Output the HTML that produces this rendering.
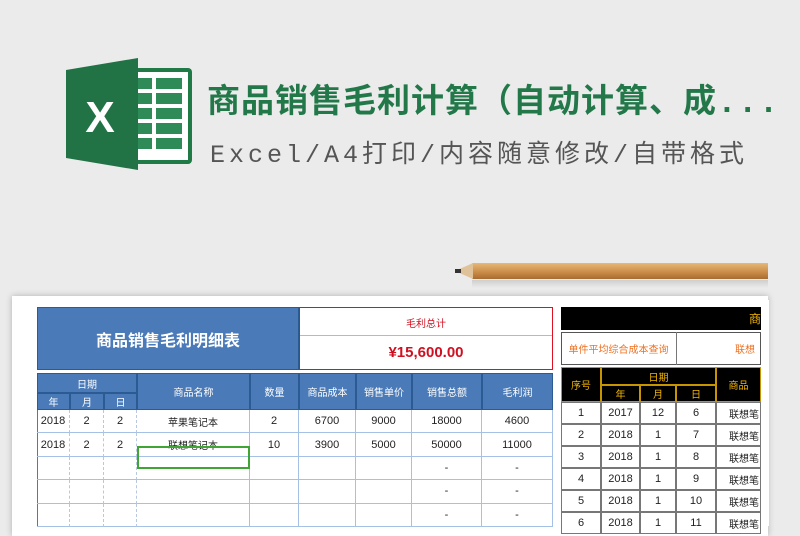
<!DOCTYPE html>
<html><head><meta charset="utf-8"><style>
*{margin:0;padding:0;box-sizing:border-box}
body{width:800px;height:526px;overflow:hidden;background:#ebebeb;position:relative;font-family:"Liberation Sans","Noto Sans CJK SC",sans-serif}
.a{position:absolute}
.t1{left:207px;top:74px;font-size:33px;font-weight:bold;color:#23784a;white-space:nowrap;letter-spacing:1px;font-family:"Liberation Mono","Noto Sans CJK SC",monospace}
.t2{left:210px;top:134px;font-size:25px;color:#555;white-space:nowrap;letter-spacing:4px;font-family:"Liberation Mono","Noto Sans CJK SC",monospace}
.sheet{left:12px;top:296px;width:756px;height:240px;background:#fff;box-shadow:0 0 6px rgba(0,0,0,.25)}
.c{position:absolute;display:flex;align-items:center;justify-content:center;font-size:11px;color:#222}
.h{background:#4a7ab8;color:#fff;border:1px solid #2c5b94;font-size:10px}
.bk{background:#000;color:#f5b800;border:1px solid #c69500;font-size:10px}
.r{border-right:1px solid #a6c1e6;border-bottom:1px solid #a6c1e6}
.g{border:1px solid #777}
</style></head><body>
<svg class="a" style="left:64px;top:56px" width="132" height="116" viewBox="0 0 132 116">
<rect x="60" y="12" width="68" height="96" rx="4" fill="#1f7a45"/>
<rect x="64" y="16" width="60" height="88" fill="#fff"/>
<g fill="#2e8b57">
<rect x="70" y="22" width="18" height="11"/><rect x="92" y="22" width="26" height="11"/>
<rect x="70" y="37" width="18" height="11"/><rect x="92" y="37" width="26" height="11"/>
<rect x="70" y="52" width="18" height="11"/><rect x="92" y="52" width="26" height="11"/>
<rect x="70" y="67" width="18" height="11"/><rect x="92" y="67" width="26" height="11"/>
<rect x="70" y="82" width="18" height="11"/><rect x="92" y="82" width="26" height="11"/>
</g>
<path d="M2 14 L74 2 L74 114 L2 102 Z" fill="#217346"/>
<text x="36" y="76" font-family="Liberation Sans" font-weight="bold" font-size="44" fill="#fff" text-anchor="middle">X</text>
</svg>
<div class="a t1">商品销售毛利计算（自动计算、成...</div>
<div class="a t2">Excel/A4打印/内容随意修改/自带格式</div>
<div class="a sheet"></div>
<div class="a" style="left:472px;top:263px;width:296px;height:16px;background:linear-gradient(#e8b877,#c98a46 60%,#a86c30);"></div>
<div class="a" style="left:455px;top:263px;width:0;height:0;border-right:18px solid #e0c29a;border-top:8px solid transparent;border-bottom:8px solid transparent"></div>
<div class="a" style="left:455px;top:269px;width:6px;height:4px;background:#333"></div>
<div class="a" style="left:472px;top:280px;width:296px;height:8px;background:linear-gradient(rgba(0,0,0,.12),transparent)"></div>

<div class="c h" style="left:37px;top:307px;width:262px;height:63px;font-size:16px;font-weight:bold">商品销售毛利明细表</div>
<div class="a" style="left:299px;top:307px;width:254px;height:63px;border:1.5px solid #e01020"></div>
<div class="c" style="left:299px;top:309px;width:254px;height:26px;color:#d01020;font-size:10px">毛利总计</div>
<div class="a" style="left:300px;top:335px;width:252px;height:1px;background:#f0a0a8"></div>
<div class="c" style="left:299px;top:336px;width:254px;height:32px;color:#d01020;font-size:15px;font-weight:bold">¥15,600.00</div>

<div class="c h" style="left:37px;top:373px;width:100px;height:20px">日期</div>
<div class="c h" style="left:37px;top:393px;width:33px;height:17px">年</div>
<div class="c h" style="left:70px;top:393px;width:34px;height:17px">月</div>
<div class="c h" style="left:104px;top:393px;width:33px;height:17px">日</div>
<div class="c h" style="left:137px;top:373px;width:113px;height:37px">商品名称</div>
<div class="c h" style="left:250px;top:373px;width:49px;height:37px">数量</div>
<div class="c h" style="left:299px;top:373px;width:57px;height:37px">商品成本</div>
<div class="c h" style="left:356px;top:373px;width:56px;height:37px">销售单价</div>
<div class="c h" style="left:412px;top:373px;width:70px;height:37px">销售总额</div>
<div class="c h" style="left:482px;top:373px;width:71px;height:37px">毛利润</div>
<div class="a" style="left:37px;top:410px;width:516px;height:116px;border-left:1px solid #4a7ab8;border-right:1px solid #4a7ab8"></div>

<div id="L"></div>
<div class="a" style="left:137px;top:446px;width:113px;height:23px;border:2px solid #3fa535"></div>

<div class="a" style="left:561px;top:307px;width:200px;height:23px;background:#000"></div>
<div class="c" style="left:745px;top:307px;width:20px;height:23px;color:#f5b800;font-size:12px">商</div>
<div class="a" style="left:561px;top:332px;width:200px;height:33px;border:1.5px solid #555"></div>
<div class="c" style="left:561px;top:332px;width:116px;height:33px;border-right:1px solid #777;color:#f07020;font-size:10px">单件平均综合成本查询</div>
<div class="c" style="left:735px;top:332px;width:30px;height:33px;color:#f07020;font-size:10px;justify-content:flex-start">联想</div>
<div class="c bk" style="left:561px;top:367px;width:40px;height:35px">序号</div>
<div class="c bk" style="left:601px;top:367px;width:115px;height:18px">日期</div>
<div class="c bk" style="left:601px;top:385px;width:39px;height:17px">年</div>
<div class="c bk" style="left:640px;top:385px;width:36px;height:17px">月</div>
<div class="c bk" style="left:676px;top:385px;width:40px;height:17px">日</div>
<div class="c bk" style="left:716px;top:367px;width:45px;height:35px">商品</div>
<div id="R"></div>
<div class="a" style="left:761px;top:300px;width:8px;height:226px;background:#fff"></div>
<script>
var L=document.getElementById('L'),h='';
var cols=[37,70,104,137,250,299,356,412,482,553];
var data=[["2018","2","2","苹果笔记本","2","6700","9000","18000","4600"],["2018","2","2","联想笔记本","10","3900","5000","50000","11000"],["","","","","","","","-","-"],["","","","","","","","-","-"],["","","","","","","","-","-"]];
for(var r=0;r<5;r++){var y=410+r*23.4;for(var i=0;i<9;i++){h+='<div class="c r" style="left:'+cols[i]+'px;top:'+y+'px;width:'+(cols[i+1]-cols[i])+'px;height:23.4px;'+(i<3?'border-right:1px dashed #b8c8e0;':'')+(data[r][i].length>3&&i==3?'font-size:10px;':'')+'">'+data[r][i]+'</div>';}}
L.outerHTML=h;
var R=document.getElementById('R');h='';
var rc=[561,601,640,676,716,761];
var rd=[["1","2017","12","6"],["2","2018","1","7"],["3","2018","1","8"],["4","2018","1","9"],["5","2018","1","10"],["6","2018","1","11"]];
for(var r=0;r<6;r++){var y=402+r*22;for(var i=0;i<5;i++){h+='<div class="c g" style="left:'+rc[i]+'px;top:'+y+'px;width:'+(rc[i+1]-rc[i])+'px;height:22px;'+(i==4?'justify-content:flex-start;padding-left:12px;font-size:10px;':'')+'">'+(i<4?rd[r][i]:'联想笔')+'</div>';}}
R.outerHTML=h;
</script>
</body></html>
